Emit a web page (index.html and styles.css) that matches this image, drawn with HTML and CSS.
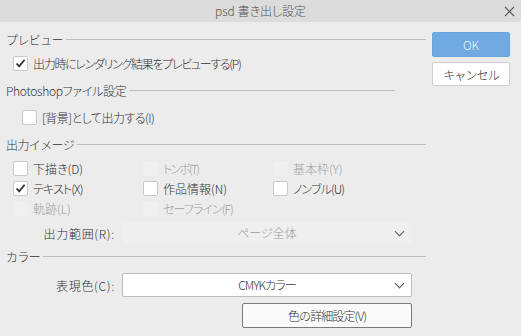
FILE: index.html
```html
<!DOCTYPE html>
<html lang="ja">

<head>
    <meta charset="UTF-8">
    <title>psd 書き出し設定</title>
    <link rel="stylesheet" href="styles.css">
</head>

<body>
    <div class="dialog">
        <div class="titlebar">
            psd 書き出し設定
            <svg class="close" width="11" height="11" viewBox="0 0 11 11">
                <path d="M1 1L10 10M10 1L1 10" stroke="#555" stroke-width="1.1" fill="none" />
            </svg>
        </div>

        <div class="content">
            <div class="main">
                <div class="group-title">プレビュー</div>
                <div class="row row-preview">
                    <span class="box checked"></span>出力時にレンダリング結果をプレビューする(P)
                </div>

                <div class="group-title group-short">Photoshopファイル設定</div>
                <div class="row row-bg">
                    <span class="box"></span>[背景]として出力する(I)
                </div>

                <div class="group-title">出力イメージ</div>
                <div class="options">
                    <div class="row"><span class="box"></span>下描き(D)</div>
                    <div class="row disabled kana-2"><span class="box"></span>トンボ(T)</div>
                    <div class="row disabled"><span class="box"></span>基本枠(Y)</div>
                    <div class="row kana-1"><span class="box checked"></span>テキスト(X)</div>
                    <div class="row"><span class="box"></span>作品情報(N)</div>
                    <div class="row kana-1"><span class="box"></span>ノンブル(U)</div>
                    <div class="row disabled"><span class="box"></span>軌跡(L)</div>
                    <div class="row disabled kana-1"><span class="box"></span>セーフライン(F)</div>
                </div>

                <div class="field field-range">
                    <span class="field-label">出力範囲(R):</span>
                    <div class="select select-disabled">ページ全体<span class="chevron"></span></div>
                </div>

                <div class="group-title">カラー</div>
                <div class="field field-color">
                    <span class="field-label">表現色(C):</span>
                    <div class="select kana-1">CMYKカラー<span class="chevron"></span></div>
                </div>

                <button class="detail-btn kana-1">色の詳細設定(V)</button>
            </div>

            <div class="side">
                <button class="btn btn-ok">OK</button>
                <button class="btn btn-cancel kana-1">キャンセル</button>
            </div>
        </div>
    </div>
</body>

</html>
```

FILE: styles.css
```css
body {
    margin: 0;
    font-family: "Noto Sans CJK JP", "Noto Sans", sans-serif;
    font-size: 12px;
    font-weight: 300;
    font-feature-settings: "palt";
    color: #333;
}

.dialog {
    width: 521px;
    height: 336px;
    background: #ececec;
    overflow: hidden;
}

.titlebar {
    position: relative;
    height: 22px;
    line-height: 22px;
    background: #dcdcdc;
    text-align: center;
    color: #555;
}

.close {
    position: absolute;
    right: 6px;
    top: 6px;
}

.content {
    display: flex;
    padding-left: 6px;
}

.main {
    width: 420px;
}

.group-title {
    display: flex;
    align-items: center;
    height: 16px;
    margin-top: 11px;
    white-space: nowrap;
    font-feature-settings: normal;
    letter-spacing: -0.6px;
}

.group-title::after {
    content: "";
    flex: 1;
    height: 1px;
    margin-left: 3px;
    background: #bdbdbd;
}

.group-title:first-child {
    margin-top: 9px;
}

.group-short {
    width: 389px;
    font-feature-settings: "palt";
    letter-spacing: -0.3px;
}

.row {
    display: flex;
    align-items: center;
    height: 15px;
    white-space: nowrap;
}

.row-preview {
    margin-top: 9px;
    padding-left: 7px;
    letter-spacing: -1.3px;
}

.row-bg {
    margin-top: 12px;
    padding-left: 16px;
    letter-spacing: -0.5px;
}

.kana-1 {
    letter-spacing: -0.9px;
}

.kana-2 {
    letter-spacing: -1.8px;
}

.box {
    flex: none;
    width: 13px;
    height: 13px;
    margin-right: 5px;
    border: 1px solid #c9c9c9;
    border-radius: 2px;
    background: #fff;
}

.checked {
    background: #fff url("data:image/svg+xml,%3Csvg xmlns='http://www.w3.org/2000/svg' width='13' height='13'%3E%3Cpath d='M2.5 6.5L5.2 9.4L10.6 2.8' stroke='%23333' stroke-width='1.8' fill='none'/%3E%3C/svg%3E") no-repeat center;
}

.disabled {
    color: #a0a0a0;
}

.disabled .box {
    border-color: #f0f0f0;
    background: #f0f0f0;
}

.options {
    display: grid;
    grid-template-columns: 130px 130px 130px;
    row-gap: 5px;
    margin-top: 9px;
    padding-left: 7px;
}

.options .box {
    margin-right: 5px;
}

.field {
    display: flex;
    align-items: center;
    height: 24px;
}

.field-range {
    margin-top: 5px;
}

.field-color {
    margin-top: 9px;
}

.field + .group-title {
    margin-top: 3px;
}

.field-label {
    width: 109px;
    padding-right: 7px;
    text-align: right;
    letter-spacing: 0.7px;
}

.select {
    position: relative;
    box-sizing: border-box;
    width: 290px;
    height: 24px;
    line-height: 22px;
    border: 1px solid #bdbdbd;
    border-radius: 2px;
    background: #fff;
    text-align: center;
}

.select-disabled {
    border-color: #ededed;
    background: #efefef;
    color: #999;
}

.chevron {
    position: absolute;
    right: 8px;
    top: 6px;
    width: 6px;
    height: 6px;
    border-right: 1px solid #555;
    border-bottom: 1px solid #555;
    transform: rotate(45deg);
}

.detail-btn {
    display: block;
    width: 170px;
    height: 25px;
    margin: 6px 0 0 236px;
    border: 1px solid #7a7a7a;
    border-radius: 2px;
    background: #fafafa;
    font-family: inherit;
    font-size: 12px;
    font-weight: 300;
    color: #333;
}

.side {
    display: flex;
    flex-direction: column;
    margin-left: 6px;
    width: 78px;
}

.btn {
    height: 24px;
    padding: 0;
    border-radius: 2px;
    font-family: inherit;
    font-size: 12px;
    font-weight: 300;
}

.btn-ok {
    height: 25px;
    margin-top: 10px;
    border: 1px solid #6aa5dc;
    background: #71aae0;
    color: #eef5fc;
}

.btn-cancel {
    margin-top: 5px;
    border: 1px solid #cfcfcf;
    background: #fff;
    color: #333;
}
```
